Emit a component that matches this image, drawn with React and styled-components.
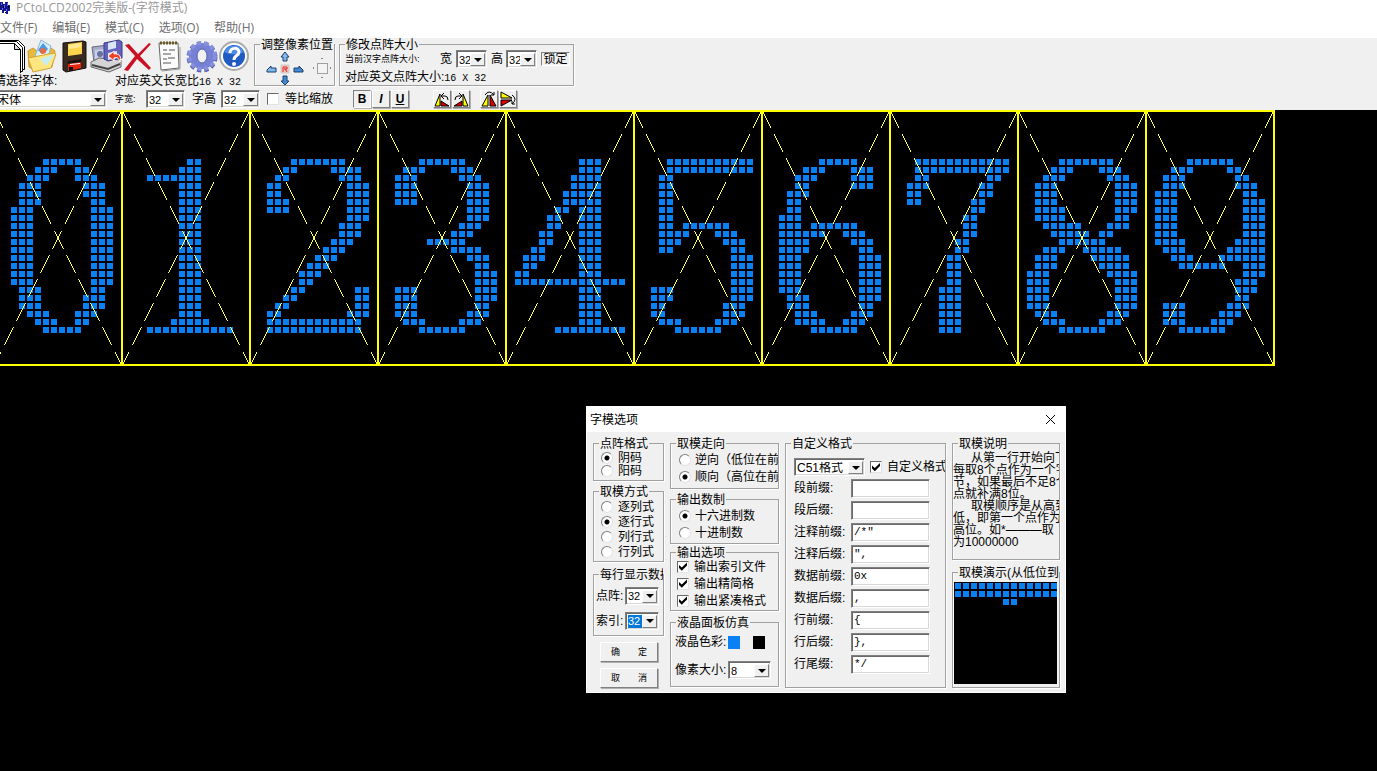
import React from 'react';
import styled, { createGlobalStyle } from 'styled-components';

const GlobalStyle = createGlobalStyle`
  * { box-sizing: border-box; }

  body {
    margin: 0;
    background: #000;
    overflow: hidden;
  }

  body, button, input, select, legend {
    font-family: 'Liberation Sans', 'Noto Sans CJK SC', sans-serif;
    font-size: 12px;
    line-height: 12px;
    color: #000;
  }
`;

const Window = styled.div`
  min-height: 100vh;
  display: flex;
  flex-direction: column;
`;

const TitleBar = styled.header`
  display: flex;
  align-items: center;
  gap: 5px;
  height: 16px;
  background: #fff;
  color: #999;
  font-family: 'Open Sans', 'Noto Sans CJK SC', sans-serif;
`;

const MenuBar = styled.nav`
  display: flex;
  gap: 15px;
  height: 22px;
  padding-top: 2px;
  align-items: center;
  background: #fff;
`;

const MenuItem = styled.a`
  color: #6d6d6d;
  text-decoration: none;
  font-family: 'Open Sans', 'Noto Sans CJK SC', sans-serif;
  white-space: nowrap;
`;

const Toolbar = styled.div`
  background: #f0f0f0;
  overflow: hidden;
`;

/* the form is scrolled a few pixels to the right */
const ToolbarInner = styled.div`
  margin-left: -6px;
`;

const ToolbarTop = styled.div`
  display: flex;
  height: 50px;
`;

const IconColumn = styled.div`
  width: 260px;
  flex: none;
`;

const IconRow = styled.div`
  display: flex;
  height: 36px;
  align-items: center;
`;

const IconButton = styled.button`
  width: 32px;
  height: 34px;
  padding: 0;
  border: 0;
  background: none;

  svg { display: block; }
`;

const CaptionRow = styled.div`
  display: flex;
  height: 14px;
  padding-top: 1px;
  justify-content: space-between;
  white-space: nowrap;
`;

const SizeCaption = styled.span`
  margin-right: 13px;
`;

const Mono = styled.span`
  font-family: 'Liberation Mono', monospace;
  font-size: 10px;
`;

const Small = styled.span`
  font-size: 9px;
  width: ${({ $width }) => $width}px;
  white-space: nowrap;
`;

const ToolbarBottom = styled.div`
  display: flex;
  align-items: center;
  height: 22px;
  white-space: nowrap;
`;

const Gap = styled.span`
  width: ${({ $width }) => $width}px;
  flex: none;
`;

const Group = styled.fieldset`
  min-width: 0;
  margin: 0;
  padding: 0;
  border: 1px solid #a0a0a0;
  box-shadow: inset 1px 0 0 #fff, 1px 1px 0 #fff;
  height: ${({ $height }) => $height}px;
  width: ${({ $width }) => ($width ? `${$width}px` : 'auto')};
  margin-top: ${({ $top }) => $top || 0}px;
`;

const GroupTitle = styled.legend`
  margin-left: 5px;
  padding: 0 1px;
  height: 12px;
  line-height: 15px;
  max-width: calc(100% - 5px);
  overflow: visible;
  overflow-x: clip;
  white-space: nowrap;
  background: #f0f0f0;
`;

const GroupBody = styled.div`
  overflow: hidden;
  padding: ${({ $padding }) => $padding || '2px 0 0 7px'};
`;

const Combo = styled.span`
  display: inline-flex;
  flex: none;
  width: ${({ $width }) => $width}px;
  height: 18px;
  background: #fff;
  border: 1px solid;
  border-color: #808080 #fff #fff #808080;
  box-shadow: inset 1px 1px 0 #696969, inset -1px -1px 0 #d8d8d8;
  padding: 2px 1px 1px 2px;

  select {
    appearance: none;
    flex: 1;
    min-width: 0;
    height: 13px;
    padding: 0;
    border: 0;
    border-radius: 0;
    outline: 0;
    font-size: ${({ $size }) => $size || 11}px;
    color: ${({ $active }) => ($active ? '#fff' : '#000')};
    background: ${({ $active }) => ($active ? '#0078d7' : 'transparent')};
  }
`;

const ComboArrow = styled.span`
  width: 15px;
  flex: none;
  display: flex;
  align-items: center;
  justify-content: center;
  background: #f0f0f0;
  border: 1px solid;
  border-color: #fff #808080 #808080 #fff;

  &::after {
    content: '';
    border: 4px solid transparent;
    border-top-color: #000;
    border-bottom: 0;
  }
`;

const Option = styled.label`
  display: flex;
  align-items: center;
  gap: ${({ $gap }) => $gap || 4}px;
  height: ${({ $height }) => $height}px;
  white-space: nowrap;
`;

const Radio = styled.input.attrs({ type: 'radio' })`
  appearance: none;
  flex: none;
  width: 12px;
  height: 12px;
  margin: 0;
  border: 1px solid;
  border-color: #808080 #e3e3e3 #e3e3e3 #808080;
  border-radius: 50%;
  background: #fff;

  &:checked {
    background: radial-gradient(circle, #000 2px, #fff 3px);
  }
`;

const Check = styled.input.attrs({ type: 'checkbox' })`
  appearance: none;
  flex: none;
  width: 12px;
  height: 12px;
  margin: 0;
  border: 1px solid;
  border-color: #696969 #e3e3e3 #e3e3e3 #696969;
  background: #fff;

  &:checked::before {
    content: '';
    display: block;
    width: 10px;
    height: 10px;
    background: #000;
    clip-path: polygon(10% 35%, 38% 60%, 90% 10%, 90% 40%, 38% 92%, 10% 65%);
  }
`;

const RaisedButton = styled.button`
  padding: 0;
  background: #f0f0f0;
  border: 1px solid;
  border-color: #fff #808080 #808080 #fff;
  box-shadow: 1px 1px 0 #b0b0b0;
`;

const StyleButton = styled(RaisedButton)`
  width: 18px;
  height: 18px;
  margin-right: 1px;
  font-weight: bold;
  font-style: ${({ $italic }) => ($italic ? 'italic' : 'normal')};
  text-decoration: ${({ $underline }) => ($underline ? 'underline' : 'none')};
  border-color: ${({ $pressed }) => ($pressed ? '#808080 #fff #fff #808080' : '#fff #808080 #808080 #fff')};

  svg { display: block; }
`;

const DialogButton = styled(RaisedButton)`
  display: block;
  width: 58px;
  height: 20px;
  margin: 6px 0 0 7px;
  font-size: 9px;
`;

const LockButton = styled(RaisedButton)`
  width: 29px;
  height: 14px;
  overflow: hidden;
  border-color: #808080 #fff #fff #808080;
  box-shadow: none;
`;

const ArrowPad = styled.div`
  display: flex;
  align-items: center;
  gap: 8px;

  svg { display: block; }
`;

const SizeRow = styled.div`
  display: flex;
  align-items: center;
  height: 18px;
  margin-bottom: 3px;
  white-space: nowrap;
`;

const Canvas = styled.main`
  position: relative;
  flex: 1;
  min-height: 661px;
  background: #000;
`;

const Matrix = styled.div`
  display: flex;
  overflow: hidden;

  svg {
    display: block;
    flex: none;
    overflow: visible;
  }

  svg:first-child { margin-left: -6px; }
`;

const Dialog = styled.section`
  position: absolute;
  left: 586px;
  top: 296px;
  width: 480px;
  background: #f0f0f0;
  border: 1px solid #fff;
`;

const DialogTitle = styled.div`
  display: flex;
  align-items: center;
  justify-content: space-between;
  height: 25px;
  padding: 0 9px 0 3px;
  background: #fff;
`;

const CloseButton = styled.button`
  padding: 0;
  border: 0;
  background: none;

  svg { display: block; }
`;

const DialogColumns = styled.div`
  display: grid;
  grid-template-columns: 71px 109px 161px 108px;
  gap: 6px;
  padding: 5px 4px 4px 6px;
`;

const Field = styled.label`
  display: flex;
  align-items: center;
  justify-content: ${({ $spread }) => ($spread ? 'space-between' : 'flex-start')};
  height: ${({ $height }) => $height}px;
  white-space: nowrap;
`;

const FieldName = styled.span`
  width: ${({ $width }) => $width}px;
  flex: none;
`;

const TextInput = styled.input`
  width: 79px;
  height: 19px;
  padding: 0 2px;
  outline: 0;
  border: 1px solid;
  border-color: #808080 #fff #fff #808080;
  box-shadow: inset 1px 1px 0 #696969, inset -1px -1px 0 #d8d8d8;
  font-family: 'Liberation Mono', monospace;
  font-size: 11px;
`;

const Swatch = styled.span`
  width: 14px;
  height: 13px;
  margin-right: 13px;
  background: ${({ $color }) => $color};
`;

const Note = styled.p`
  margin: 0;
  line-height: 12px;
  white-space: pre;
`;

const Indent = styled.span`
  padding-left: 18px;
`;

const Preview = styled.svg`
  display: block;
  width: 103px;
  height: 102px;
  background: #000;
`;

/* lit columns for rows 6 to 27 of every 16x32 character */
const DIGITS = [
  '6-10|5-7,10-11|4-6,10-12|3-5,11-13|3-5,11-13|3-5,12-13|2-4,12-14|2-4,12-14|2-4,12-14|2-4,12-14|2-4,12-14|2-4,12-14|2-4,12-14|2-4,12-14|2-4,12-14|2-4,12-14|3-5,12-13|3-5,11-13|3-5,11-13|4-6,10-12|5-7,10-11|6-10',
  '8-9|7-9|3-9|7-9|7-9|7-9|7-9|7-9|7-9|7-9|7-9|7-9|7-9|7-9|7-9|7-9|7-9|7-9|7-9|7-9|6-10|3-13',
  '5-11|4-5,10-13|3-4,11-13|2-3,12-14|2-3,12-14|2-4,12-14|2-4,12-14|12-14|11-13|11-13|10-12|9-11|8-10|7-9|6-8|6-7|5-6,13-14|4-5,13-14|3-4,13-14|2-3,12-14|2-13|2-13',
  '5-10|3-5,9-11|2-4,10-12|2-4,11-13|2-4,11-13|2-4,11-13|11-13|11-13|10-12|9-11|6-10|9-12|11-13|12-13|12-14|12-14|2-4,12-14|2-4,12-14|2-4,12-13|2-4,11-13|3-5,10-12|5-10',
  '9-11|9-11|8-11|8-11|7-11|7-11|6-7,9-11|5-6,9-11|5-6,9-11|4-5,9-11|4-5,9-11|3-4,9-11|2-4,9-11|2-3,9-11|1-2,9-11|1-14|9-11|9-11|9-11|9-11|9-11|6-14',
  '4-14|4-14|3-4|3-4|3-4|3-4|3-4|3-4|3-4,6-11|3-6,10-12|3-5,11-13|3-4,12-13|12-14|12-14|12-14|12-14|2-4,12-14|2-4,12-14|2-3,11-13|2-3,11-13|3-5,10-12|5-10',
  '7-11|5-7,11-13|4-6,11-13|4-5,11-13|3-5|3-4|3-4|2-4|2-4,6-11|2-7,10-12|2-5,11-13|2-5,12-13|2-4,12-14|2-4,12-14|2-4,12-14|2-4,12-14|2-4,12-14|3-5,12-14|3-5,12-13|4-6,11-13|4-7,10-12|6-11',
  '3-14|3-14|3-4,12-13|2-4,11-12|2-3,11-12|2-3,10-11|10-11|9-10|9-10|9-10|8-9|8-9|7-8|7-8|7-8|7-8|6-8|6-8|6-8|6-8|6-8|6-8',
  '5-11|4-6,10-12|3-5,11-13|2-4,12-14|2-4,12-14|2-4,12-14|2-5,12-14|2-5,12-13|3-7,11-13|4-8,10-11|5-10|3-5,8-12|2-4,9-13|2-4,10-13|1-3,11-14|1-3,12-14|1-3,12-14|1-3,12-14|1-3,12-14|2-4,11-13|3-5,10-12|5-10',
  '5-10|3-5,10-11|2-4,11-12|2-4,11-13|1-3,12-13|1-3,12-14|1-3,12-14|1-3,12-14|1-3,12-14|1-3,12-14|1-4,11-14|2-4,10-14|3-5,9-14|4-9,12-14|12-14|11-13|11-13|11-12|2-4,10-12|2-4,9-11|2-4,8-10|4-9',
];

const dotPath = (rows, top = 6) =>
  rows
    .split('|')
    .map((row, r) =>
      row
        .split(',')
        .map((run) => {
          const [from, to] = run.split('-').map(Number);
          let d = '';
          for (let c = from; c <= to; c += 1) {
            d += `M${c * 8 + 1} ${(r + top) * 8 + 1}h6v6h-6z`;
          }
          return d;
        })
        .join('')
    )
    .join('');

const Character = ({ rows }) => (
  <svg width="128" height="256" viewBox="0 0 128 256" shapeRendering="crispEdges">
    <path d={dotPath(rows)} fill="#0a80f5" />
    <path d="M0 0L128 256M128 0L0 256" stroke="#ffff4d" strokeDasharray="20 7" fill="none" />
    <path d="M0 1H128M0 255H128M0 0V256M128 0V256" stroke="#ff0" strokeWidth="2" />
  </svg>
);

const Select = ({ label, value, ...rest }) => (
  <Combo {...rest}>
    <select aria-label={label} defaultValue={value}>
      <option>{value}</option>
    </select>
    <ComboArrow />
  </Combo>
);

const AppIcon = () => (
  <svg width="11" height="14" viewBox="0 0 11 14" shapeRendering="crispEdges">
    <path d="M0 1h3v2h2v-2h3v3h2v6h-2v3h-2v-3h-2v2h-2v-3h-2z" fill="#16168c" />
    <path d="M1 2h1v2h-1zM4 4h1v3h-1zM7 2h1v3h-1zM6 8h1v2h-1zM2 7h1v2h-1z" fill="#5c6cff" />
    <path d="M3 5h1v2h-1zM8 5h1v2h-1zM5 11h1v1h-1z" fill="#000" />
  </svg>
);

const NewIcon = () => (
  <svg width="32" height="34" viewBox="0 0 32 34" fill="#fff" stroke="#000">
    <path d="M5 1.500h19.500l6 6v23h-25.500z" />
    <path d="M2 2.500h20.500l6 6v24h-26.500z" />
    <path d="M-2 4.500h22.500l6 6v24h-28.500z" />
    <path d="M20.500 4.500v6h6z" fill="#ddd" />
  </svg>
);

const OpenIcon = () => (
  <svg width="32" height="34" viewBox="0 0 32 34">
    <path d="M2 12l5-3 4 3 14-3 4 3-3 16-17 4-6-4z" fill="#e9b93c" stroke="#c69a30" />
    <path d="M15 1l10 6-4 15-12-5z" fill="#d5efff" stroke="#8cb6d4" />
    <path d="M17 4l5 6-5 6-5-5z" fill="#4c9ae2" />
    <circle cx="17" cy="12" r="3" fill="#e66a43" />
    <path d="M10 18c3-4 10-4 13-2l-3 4z" fill="#fff" />
    <path d="M2 19l26-5 2 1-5 14-18 4z" fill="#ffe681" stroke="#d1a32e" />
    <path d="M14 20l15-5-9 12z" fill="#c4eef2" />
  </svg>
);

const DiskIcon = () => (
  <svg width="32" height="34" viewBox="0 0 32 34">
    <path d="M5 4l20-2 3 1v26l-20 4-3-2z" fill="#3a2b20" stroke="#17110d" />
    <path d="M10 5l14-2v12l-14 2z" fill="#ffd44d" />
    <path d="M11 6l12-2v4l-12 2z" fill="#ffe994" />
    <path d="M10 22l13-2v9l-13 3z" fill="#e8250d" />
    <path d="M10 22l13-2v3l-13 2z" fill="#111" />
    <path d="M12 25l10-1v1l-10 1z" fill="#fff" />
    <path d="M11 28h4v4h-4z" fill="#111" />
  </svg>
);

const SaveIcon = () => (
  <svg width="33" height="34" viewBox="0 0 33 34">
    <path d="M2 8l16-2 3 15-17 2z" fill="#a8acc6" stroke="#66697f" />
    <path d="M5 11l9-1v9l-9 1z" fill="#c9d1ea" />
    <circle cx="10" cy="15" r="3" fill="#6a70a0" />
    <path d="M1 23l8-4 22 2v7l-12 5-18-5z" fill="#d4d4d6" stroke="#666" />
    <path d="M2 26l16 4 12-5" fill="none" stroke="#444" strokeWidth="2" />
    <path d="M14 4l15-3 3 2v16l-14 3-4-2z" fill="#6464bd" stroke="#393985" />
    <path d="M18 4l8-2v7l-8 2z" fill="#d9e5fb" />
    <path d="M18 14l9-2v7l-9 2z" fill="#e5e5ef" />
    <path d="M18 17l6-5v3c5-1 8 3 6 8-1-4-3-5-6-4v3z" fill="#f14022" stroke="#fff" />
  </svg>
);

const DeleteIcon = () => (
  <svg width="32" height="34" viewBox="0 0 32 34">
    <path d="M3 6l4-1 9 10 11-11 2 1-11 12 11 12-2 2-12-11-9 12-4-1 11-14z" fill="#cb1224" />
  </svg>
);

const NotesIcon = () => (
  <svg width="32" height="34" viewBox="0 0 32 34">
    <path d="M5 4h19l1 25-18 2z" fill="#fbfbfb" stroke="#666" />
    <path d="M6 4h18" stroke="#6b5a20" strokeWidth="3" strokeDasharray="2 1" />
    <path d="M9 11h4M15 11h6M9 15h8M9 20h4M14 19h7M9 24h8" stroke="#555" />
    <path d="M26 8v22l-18 2" fill="none" stroke="#999" />
  </svg>
);

const GearIcon = () => (
  <svg width="32" height="34" viewBox="0 0 32 34">
    <circle cx="16" cy="18" r="13" fill="none" stroke="#5660ae" strokeWidth="5" strokeDasharray="4 3" />
    <circle cx="16" cy="17" r="9" fill="none" stroke="#7680d4" strokeWidth="8" />
    <circle cx="16" cy="17" r="13" fill="none" stroke="#8790de" strokeWidth="4" strokeDasharray="4 3" />
    <ellipse cx="16" cy="17" rx="5" ry="7" fill="#f0f0f0" stroke="#555da8" />
  </svg>
);

const HelpIcon = () => (
  <svg width="32" height="34" viewBox="0 0 32 34">
    <circle cx="16" cy="17" r="14" fill="#fff" stroke="#aaa" strokeWidth="2" />
    <circle cx="16" cy="17" r="11" fill="#205bc4" />
    <path d="M6 13a11 11 0 0 1 20 0q-9 5-20 0" fill="#4d8be8" />
    <path d="M12 14c0-6 9-6 9-1 0 4-5 3-5 8" fill="none" stroke="#fff" strokeWidth="3" />
    <circle cx="16" cy="25" r="2" fill="#fff" />
  </svg>
);

const TOOLS = [
  ['新建', NewIcon],
  ['打开', OpenIcon],
  ['保存', DiskIcon],
  ['另存', SaveIcon],
  ['删除', DeleteIcon],
  ['文本', NotesIcon],
  ['选项', GearIcon],
  ['帮助', HelpIcon],
];

const MoveArrows = () => (
  <svg width="38" height="36" viewBox="0 0 38 36">
    <g stroke="#1d3f66">
      <path d="M15 7l4-5 4 5h-2v4h-4v-4z" fill="#7fb9ef" />
      <path d="M15 31l4 4 4-4h-2v-5h-4v5z" fill="#3f8bd5" />
      <path d="M1 20l4-4v2h5v4h-9z" fill="#7fb9ef" />
      <path d="M37 20l-4-4v2h-5v4h9z" fill="#3f8bd5" />
    </g>
    <path d="M15 15h8v8h-8z" fill="#f7c5bd" stroke="#ccc" />
    <path d="M17 22v-5h4v2h-3M19 19l2 3" fill="none" stroke="#d22" />
  </svg>
);

const FrameArrows = () => (
  <svg width="20" height="22" viewBox="0 0 20 22" shapeRendering="crispEdges">
    <path d="M5 6h10v10h-10z" fill="#f4f4f4" stroke="#a0a0a0" />
    <path d="M9 1h2v1h-2zM9 20h2v1h-2zM1 10h1v2h-1zM18 10h1v2h-1z" fill="#888" />
  </svg>
);

const RotateIcon = ({ flip }) => (
  <svg width="16" height="16" viewBox="0 0 16 16">
    <g transform={flip ? 'matrix(-1 0 0 1 16 0)' : undefined}>
      <path d="M1 15l5-12v12z" fill="#ff0" stroke="#000" />
      <path d="M7 15v-5l8 5z" fill="#d00" stroke="#000" />
      <path d="M8 5h3q3 0 3 4M10 2l-3 3 3 3" fill="none" stroke="#000" />
    </g>
  </svg>
);

const MirrorIcon = ({ vertical }) => (
  <svg width="16" height="16" viewBox="0 0 16 16">
    <g transform={vertical ? 'rotate(90 8 8)' : undefined}>
      <path d="M1 15l6-11v11z" fill="#ff0" stroke="#000" />
      <path d="M9 4v11h6z" fill="#d00" stroke="#000" />
      <path d="M4 4q4-6 9 0M13 1v3h-3" fill="none" stroke="#000" />
    </g>
  </svg>
);

const CODE_FIELDS = [
  ['段前缀:', ''],
  ['段后缀:', ''],
  ['注释前缀:', '/*"'],
  ['注释后缀:', '",'],
  ['数据前缀:', '0x'],
  ['数据后缀:', ','],
  ['行前缀:', '{'],
  ['行后缀:', '},'],
  ['行尾缀:', '*/'],
];

const RadioList = ({ name, items, selected, height, gap }) =>
  items.map((item) => (
    <Option key={item} $height={height} $gap={gap}>
      <Radio name={name} defaultChecked={item === selected} />
      {item}
    </Option>
  ));

const OptionsDialog = () => (
  <Dialog role="dialog" aria-labelledby="options-title">
    <DialogTitle>
      <span id="options-title">字模选项</span>
      <CloseButton aria-label="关闭">
        <svg width="11" height="11" viewBox="0 0 11 11">
          <path d="M1 1l9 9M10 1l-9 9" stroke="#000" />
        </svg>
      </CloseButton>
    </DialogTitle>
    <DialogColumns>
      <div>
        <Group $height={44}>
          <GroupTitle>点阵格式</GroupTitle>
          <GroupBody>
            <RadioList name="code" items={['阴码', '阳码']} selected="阴码" height={13} gap={5} />
          </GroupBody>
        </Group>
        <Group $height={77} $top={4}>
          <GroupTitle>取模方式</GroupTitle>
          <GroupBody>
            <RadioList name="scan" items={['逐列式', '逐行式', '列行式', '行列式']} selected="逐行式" height={15} gap={5} />
          </GroupBody>
        </Group>
        <Group $height={68} $top={6}>
          <GroupTitle>每行显示数据</GroupTitle>
          <GroupBody $padding="3px 4px 0 2px">
            <Field $height={25} $spread>
              点阵:
              <Select label="点阵" value="32" $width={34} />
            </Field>
            <Field $height={25} $spread>
              索引:
              <Select label="索引" value="32" $width={34} $active />
            </Field>
          </GroupBody>
        </Group>
        <DialogButton>确　　定</DialogButton>
        <DialogButton>取　　消</DialogButton>
      </div>
      <div>
        <Group $height={52}>
          <GroupTitle>取模走向</GroupTitle>
          <GroupBody $padding="2px 0 0 8px">
            <RadioList name="direction" items={['逆向（低位在前）', '顺向（高位在前）']} selected="顺向（高位在前）" height={17} />
          </GroupBody>
        </Group>
        <Group $height={51} $top={4}>
          <GroupTitle>输出数制</GroupTitle>
          <GroupBody $padding="2px 0 0 8px">
            <RadioList name="base" items={['十六进制数', '十进制数']} selected="十六进制数" height={17} />
          </GroupBody>
        </Group>
        <Group $height={65} $top={2}>
          <GroupTitle>输出选项</GroupTitle>
          <GroupBody $padding="0 18px 0 6px">
            {['输出索引文件', '输出精简格', '输出紧凑格式'].map((item) => (
              <Option key={item} $height={17} $gap={5}>
                <Check defaultChecked />
                {item}
              </Option>
            ))}
          </GroupBody>
        </Group>
        <Group $height={71} $top={5}>
          <GroupTitle>液晶面板仿真</GroupTitle>
          <GroupBody $padding="0 0 0 4px">
            <Field as="div" $height={28}>
              <FieldName $width={53}>液晶色彩:</FieldName>
              <Swatch $color="#0a80f5" />
              <Swatch $color="#000" />
            </Field>
            <Field $height={28}>
              <FieldName $width={53}>像素大小:</FieldName>
              <Select label="像素大小" value="8" $width={43} />
            </Field>
          </GroupBody>
        </Group>
      </div>
      <Group $height={251}>
        <GroupTitle>自定义格式</GroupTitle>
        <GroupBody $padding="8px 4px 0 8px">
          <Option as="div" $height={20} $gap={5}>
            <Select label="格式" value="C51格式" $width={71} $size={12} />
            <Option $height={20} $gap={5}>
              <Check defaultChecked />
              自定义格式
            </Option>
          </Option>
          {CODE_FIELDS.map(([name, value]) => (
            <Field key={name} $height={22}>
              <FieldName $width={57}>{name}</FieldName>
              <TextInput defaultValue={value} />
            </Field>
          ))}
        </GroupBody>
      </Group>
      <div>
        <Group $height={123}>
          <GroupTitle>取模说明</GroupTitle>
          <GroupBody $padding="3px 0 0">
            <Note>
              <Indent>从第一行开始向下</Indent>
              {'\n每取8个点作为一个字\n节，如果最后不足8个\n点就补满8位。\n'}
              <Indent>取模顺序是从高到</Indent>
              {'\n低，即第一个点作为最\n高位。如*———取\n为10000000'}
            </Note>
          </GroupBody>
        </Group>
        <Group $height={122} $top={6}>
          <GroupTitle>取模演示(从低位到高位)</GroupTitle>
          <GroupBody $padding="4px 0 0 1px">
            <Preview shapeRendering="crispEdges">
              <path d={dotPath('0-12|0-12|6-7', 0)} fill="#0a80f5" />
            </Preview>
          </GroupBody>
        </Group>
      </div>
    </DialogColumns>
  </Dialog>
);

const App = () => (
  <Window>
    <GlobalStyle />
    <TitleBar>
      <AppIcon />
      PCtoLCD2002完美版-(字符模式)
    </TitleBar>
    <MenuBar>
      {['文件(F)', '编辑(E)', '模式(C)', '选项(O)', '帮助(H)'].map((item) => (
        <MenuItem key={item} href="#">{item}</MenuItem>
      ))}
    </MenuBar>
    <Toolbar>
      <ToolbarInner>
        <ToolbarTop>
          <IconColumn>
            <IconRow>
              {TOOLS.map(([name, Icon]) => (
                <IconButton key={name} aria-label={name}>
                  <Icon />
                </IconButton>
              ))}
            </IconRow>
            <CaptionRow>
              <span>请选择字体:</span>
              <SizeCaption>
                对应英文长宽比<Mono>16 X 32</Mono>
              </SizeCaption>
            </CaptionRow>
          </IconColumn>
          <Group $width={81} $height={48}>
            <GroupTitle>调整像素位置</GroupTitle>
            <GroupBody $padding="0 0 0 11px">
              <ArrowPad>
                <MoveArrows />
                <FrameArrows />
              </ArrowPad>
            </GroupBody>
          </Group>
          <Gap $width={4} />
          <Group $width={235} $height={48}>
            <GroupTitle>修改点阵大小</GroupTitle>
            <GroupBody $padding="0 3px 0 5px">
              <SizeRow>
                <Small $width={95}>当前汉字点阵大小:</Small>
                宽
                <Gap $width={4} />
                <Select label="宽" value="32" $width={31} />
                <Gap $width={4} />
                高
                <Gap $width={3} />
                <Select label="高" value="32" $width={31} />
                <Gap $width={4} />
                <LockButton>锁定</LockButton>
              </SizeRow>
              对应英文点阵大小:<Mono>16 X 32</Mono>
            </GroupBody>
          </Group>
        </ToolbarTop>
        <ToolbarBottom>
          <Select label="请选择字体" value="宋体" $width={113} $size={12} />
          <Gap $width={8} />
          <Small $width={31}>字宽:</Small>
          <Select label="字宽" value="32" $width={39} />
          <Gap $width={7} />
          字高
          <Gap $width={5} />
          <Select label="字高" value="32" $width={39} />
          <Gap $width={7} />
          <Option $height={18} $gap={6}>
            <Check />
            等比缩放
          </Option>
          <Gap $width={20} />
          <StyleButton $pressed>B</StyleButton>
          <StyleButton $italic>I</StyleButton>
          <StyleButton $underline>U</StyleButton>
          <Gap $width={23} />
          <StyleButton aria-label="左转"><RotateIcon /></StyleButton>
          <StyleButton aria-label="右转"><RotateIcon flip /></StyleButton>
          <Gap $width={9} />
          <StyleButton aria-label="水平翻转"><MirrorIcon /></StyleButton>
          <StyleButton aria-label="垂直翻转"><MirrorIcon vertical /></StyleButton>
        </ToolbarBottom>
      </ToolbarInner>
    </Toolbar>
    <Canvas>
      <Matrix>
        {DIGITS.map((rows, digit) => (
          <Character key={digit} rows={rows} />
        ))}
      </Matrix>
      <OptionsDialog />
    </Canvas>
  </Window>
);

export default App;
